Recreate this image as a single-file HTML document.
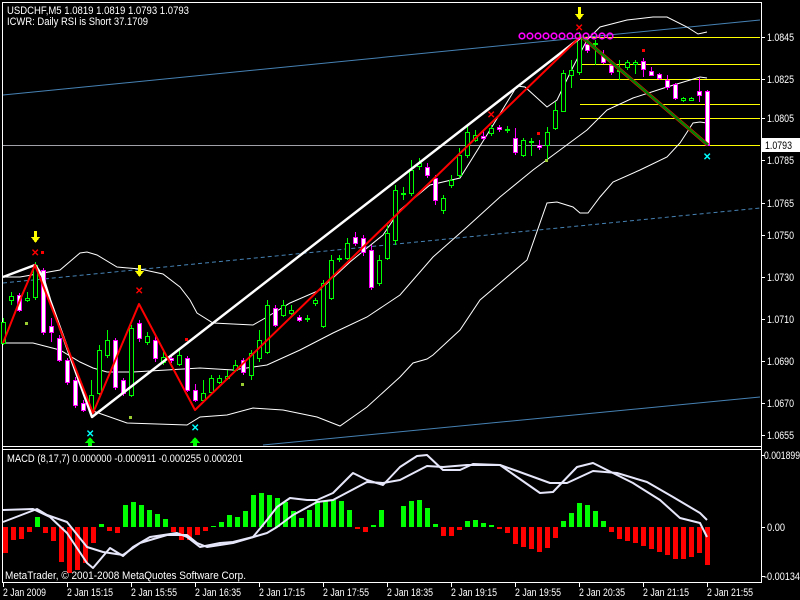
<!DOCTYPE html>
<html><head><meta charset="utf-8"><style>
html,body{margin:0;padding:0;background:#000;width:800px;height:600px;overflow:hidden}
svg{display:block}
text{font-family:"Liberation Sans",sans-serif;font-size:11px;fill:#fff}
</style></head><body>
<svg width="800" height="600" viewBox="0 0 800 600" xmlns="http://www.w3.org/2000/svg" shape-rendering="crispEdges">
<rect width="800" height="600" fill="#000"/>
<g stroke="#fff" stroke-width="1" fill="none">
<line x1="2.5" y1="2.5" x2="761.5" y2="2.5"/>
<line x1="2.5" y1="2" x2="2.5" y2="583"/>
<line x1="761.5" y1="2" x2="761.5" y2="583"/>
<line x1="2" y1="446.5" x2="762" y2="446.5"/>
<line x1="2" y1="449.5" x2="762" y2="449.5"/>
<line x1="2" y1="582.5" x2="762" y2="582.5"/>
</g>
<g stroke="#fff">
<line x1="762" y1="37.5" x2="765" y2="37.5"/><line x1="762" y1="79.5" x2="765" y2="79.5"/><line x1="762" y1="118.5" x2="765" y2="118.5"/><line x1="762" y1="160.5" x2="765" y2="160.5"/><line x1="762" y1="203.5" x2="765" y2="203.5"/><line x1="762" y1="235.5" x2="765" y2="235.5"/><line x1="762" y1="277.5" x2="765" y2="277.5"/><line x1="762" y1="319.5" x2="765" y2="319.5"/><line x1="762" y1="361.5" x2="765" y2="361.5"/><line x1="762" y1="403.5" x2="765" y2="403.5"/><line x1="762" y1="435.5" x2="765" y2="435.5"/>
<line x1="762" y1="455.5" x2="765" y2="455.5"/><line x1="762" y1="527.5" x2="765" y2="527.5"/><line x1="762" y1="576.5" x2="765" y2="576.5"/>
</g>
<g>
<text x="767" y="41" textLength="27" lengthAdjust="spacingAndGlyphs">1.0845</text><text x="767" y="83" textLength="27" lengthAdjust="spacingAndGlyphs">1.0825</text><text x="767" y="122" textLength="27" lengthAdjust="spacingAndGlyphs">1.0805</text><text x="767" y="164" textLength="27" lengthAdjust="spacingAndGlyphs">1.0785</text><text x="767" y="207" textLength="27" lengthAdjust="spacingAndGlyphs">1.0765</text><text x="767" y="239" textLength="27" lengthAdjust="spacingAndGlyphs">1.0750</text><text x="767" y="281" textLength="27" lengthAdjust="spacingAndGlyphs">1.0730</text><text x="767" y="323" textLength="27" lengthAdjust="spacingAndGlyphs">1.0710</text><text x="767" y="365" textLength="27" lengthAdjust="spacingAndGlyphs">1.0690</text><text x="767" y="407" textLength="27" lengthAdjust="spacingAndGlyphs">1.0670</text><text x="767" y="439" textLength="27" lengthAdjust="spacingAndGlyphs">1.0655</text>
<text x="764" y="459" textLength="36" lengthAdjust="spacingAndGlyphs">0.001899</text><text x="767" y="531" textLength="18" lengthAdjust="spacingAndGlyphs">0.00</text><text x="764" y="580" textLength="36" lengthAdjust="spacingAndGlyphs">-0.00134</text>
</g>
<g stroke="#fff"><line x1="3.5" y1="583" x2="3.5" y2="587"/><line x1="67.5" y1="583" x2="67.5" y2="587"/><line x1="131.5" y1="583" x2="131.5" y2="587"/><line x1="195.5" y1="583" x2="195.5" y2="587"/><line x1="259.5" y1="583" x2="259.5" y2="587"/><line x1="323.5" y1="583" x2="323.5" y2="587"/><line x1="387.5" y1="583" x2="387.5" y2="587"/><line x1="451.5" y1="583" x2="451.5" y2="587"/><line x1="515.5" y1="583" x2="515.5" y2="587"/><line x1="579.5" y1="583" x2="579.5" y2="587"/><line x1="643.5" y1="583" x2="643.5" y2="587"/><line x1="707.5" y1="583" x2="707.5" y2="587"/></g>
<g><text x="3" y="596" textLength="43" lengthAdjust="spacingAndGlyphs">2 Jan 2009</text><text x="67" y="596" textLength="46" lengthAdjust="spacingAndGlyphs">2 Jan 15:15</text><text x="131" y="596" textLength="46" lengthAdjust="spacingAndGlyphs">2 Jan 15:55</text><text x="195" y="596" textLength="46" lengthAdjust="spacingAndGlyphs">2 Jan 16:35</text><text x="259" y="596" textLength="46" lengthAdjust="spacingAndGlyphs">2 Jan 17:15</text><text x="323" y="596" textLength="46" lengthAdjust="spacingAndGlyphs">2 Jan 17:55</text><text x="387" y="596" textLength="46" lengthAdjust="spacingAndGlyphs">2 Jan 18:35</text><text x="451" y="596" textLength="46" lengthAdjust="spacingAndGlyphs">2 Jan 19:15</text><text x="515" y="596" textLength="46" lengthAdjust="spacingAndGlyphs">2 Jan 19:55</text><text x="579" y="596" textLength="46" lengthAdjust="spacingAndGlyphs">2 Jan 20:35</text><text x="643" y="596" textLength="46" lengthAdjust="spacingAndGlyphs">2 Jan 21:15</text><text x="707" y="596" textLength="46" lengthAdjust="spacingAndGlyphs">2 Jan 21:55</text></g>

<g shape-rendering="auto" fill="none" stroke="#4682B4" stroke-width="1">
<line x1="3" y1="95" x2="760" y2="20"/>
<line x1="3" y1="283" x2="760" y2="208" stroke-dasharray="4,3"/>
<line x1="263" y1="445" x2="760" y2="397"/>
</g>
<g stroke="#ffff00"><line x1="580" y1="37.5" x2="760" y2="37.5"/><line x1="580" y1="64.5" x2="760" y2="64.5"/><line x1="580" y1="79.5" x2="760" y2="79.5"/><line x1="580" y1="104.5" x2="760" y2="104.5"/><line x1="580" y1="118.5" x2="760" y2="118.5"/><line x1="580" y1="145.5" x2="760" y2="145.5"/></g>
<line x1="3" y1="145.5" x2="580" y2="145.5" stroke="#a0a0a8"/>
<rect x="762" y="138" width="38" height="14" fill="#fff"/>
<text x="765" y="149" textLength="27" lengthAdjust="spacingAndGlyphs" style="fill:#000">1.0793</text>

<g shape-rendering="auto" fill="none" stroke="#fff" stroke-width="1">
<polyline points="3,277 20,277 43,273 60,270 80,253 87,252 97,255 117,267 140,269 163,274 180,287 190,300 197,313 213,323 253,325 267,317 290,303 320,290 350,262 367,248 383,235 400,210 430,185 460,178 490,130 517,86 525,87 547,107 557,100 573,67 587,40 600,27 627,20 653,17 667,17 687,27 698,34 707,32"/>
<polyline points="3,343 33,343 60,350 80,362 93,368 107,372 133,372 200,368 233,370 267,365 300,350 333,333 367,317 400,295 433,257 467,227 500,197 533,170 560,150 587,130 607,110 633,98 667,87 700,77 707,78"/>
<polyline points="90,410 127,423 187,425 200,417 227,415 253,408 283,410 317,417 340,426 367,407 400,377 413,363 427,359 433,355 460,330 480,300 500,283 527,260 547,203 557,202 573,207 580,213 588,213 600,197 613,182 640,170 667,157 680,143 693,123 700,122 707,123"/>
</g>

<g stroke-width="1">
<g stroke="#00ff00">
<line x1="3.5" y1="318" x2="3.5" y2="345"/><line x1="11.5" y1="292" x2="11.5" y2="305"/><line x1="27.5" y1="292" x2="27.5" y2="302"/><line x1="35.5" y1="262" x2="35.5" y2="300"/><line x1="91.5" y1="380" x2="91.5" y2="412"/><line x1="99.5" y1="345" x2="99.5" y2="395"/><line x1="107.5" y1="330" x2="107.5" y2="358"/><line x1="131.5" y1="325" x2="131.5" y2="397"/><line x1="147.5" y1="332" x2="147.5" y2="345"/><line x1="163.5" y1="352" x2="163.5" y2="365"/><line x1="179.5" y1="350" x2="179.5" y2="366"/><line x1="203.5" y1="380" x2="203.5" y2="402"/><line x1="211.5" y1="375" x2="211.5" y2="393"/><line x1="219.5" y1="375" x2="219.5" y2="384"/><line x1="227.5" y1="370" x2="227.5" y2="380"/><line x1="235.5" y1="360" x2="235.5" y2="372"/><line x1="251.5" y1="350" x2="251.5" y2="380"/><line x1="259.5" y1="330" x2="259.5" y2="362"/><line x1="267.5" y1="300" x2="267.5" y2="354"/><line x1="283.5" y1="300" x2="283.5" y2="317"/><line x1="291.5" y1="305" x2="291.5" y2="315"/><line x1="307.5" y1="315" x2="307.5" y2="322"/><line x1="315.5" y1="298" x2="315.5" y2="306"/><line x1="323.5" y1="280" x2="323.5" y2="328"/><line x1="331.5" y1="255" x2="331.5" y2="300"/><line x1="339.5" y1="255" x2="339.5" y2="262"/><line x1="347.5" y1="238" x2="347.5" y2="260"/><line x1="379.5" y1="255" x2="379.5" y2="286"/><line x1="387.5" y1="225" x2="387.5" y2="260"/><line x1="395.5" y1="185" x2="395.5" y2="245"/><line x1="403.5" y1="187" x2="403.5" y2="200"/><line x1="411.5" y1="160" x2="411.5" y2="196"/><line x1="419.5" y1="158" x2="419.5" y2="170"/><line x1="443.5" y1="195" x2="443.5" y2="214"/><line x1="451.5" y1="175" x2="451.5" y2="188"/><line x1="459.5" y1="148" x2="459.5" y2="178"/><line x1="467.5" y1="125" x2="467.5" y2="158"/><line x1="475.5" y1="130" x2="475.5" y2="142"/><line x1="491.5" y1="125" x2="491.5" y2="136"/><line x1="507.5" y1="126" x2="507.5" y2="133"/><line x1="523.5" y1="138" x2="523.5" y2="157"/><line x1="531.5" y1="138" x2="531.5" y2="156"/><line x1="547.5" y1="127" x2="547.5" y2="160"/><line x1="555.5" y1="102" x2="555.5" y2="130"/><line x1="563.5" y1="70" x2="563.5" y2="112"/><line x1="571.5" y1="60" x2="571.5" y2="88"/><line x1="579.5" y1="32" x2="579.5" y2="75"/><line x1="595.5" y1="40" x2="595.5" y2="65"/><line x1="619.5" y1="60" x2="619.5" y2="80"/><line x1="627.5" y1="60" x2="627.5" y2="70"/><line x1="635.5" y1="60" x2="635.5" y2="74"/><line x1="683.5" y1="97" x2="683.5" y2="102"/><line x1="691.5" y1="97" x2="691.5" y2="101"/>
</g>
<g stroke="#ff00ff">
<line x1="19.5" y1="293" x2="19.5" y2="312"/><line x1="43.5" y1="268" x2="43.5" y2="335"/><line x1="51.5" y1="318" x2="51.5" y2="342"/><line x1="59.5" y1="335" x2="59.5" y2="362"/><line x1="67.5" y1="358" x2="67.5" y2="385"/><line x1="75.5" y1="377" x2="75.5" y2="408"/><line x1="83.5" y1="400" x2="83.5" y2="412"/><line x1="115.5" y1="338" x2="115.5" y2="390"/><line x1="123.5" y1="378" x2="123.5" y2="396"/><line x1="139.5" y1="320" x2="139.5" y2="342"/><line x1="155.5" y1="336" x2="155.5" y2="362"/><line x1="171.5" y1="356" x2="171.5" y2="363"/><line x1="187.5" y1="356" x2="187.5" y2="392"/><line x1="195.5" y1="384" x2="195.5" y2="402"/><line x1="243.5" y1="358" x2="243.5" y2="375"/><line x1="275.5" y1="305" x2="275.5" y2="327"/><line x1="299.5" y1="315" x2="299.5" y2="322"/><line x1="355.5" y1="232" x2="355.5" y2="246"/><line x1="363.5" y1="235" x2="363.5" y2="256"/><line x1="371.5" y1="245" x2="371.5" y2="290"/><line x1="427.5" y1="163" x2="427.5" y2="178"/><line x1="435.5" y1="175" x2="435.5" y2="205"/><line x1="483.5" y1="130" x2="483.5" y2="140"/><line x1="499.5" y1="125" x2="499.5" y2="132"/><line x1="515.5" y1="128" x2="515.5" y2="155"/><line x1="539.5" y1="140" x2="539.5" y2="150"/><line x1="587.5" y1="40" x2="587.5" y2="53"/><line x1="603.5" y1="50" x2="603.5" y2="64"/><line x1="611.5" y1="60" x2="611.5" y2="75"/><line x1="643.5" y1="58" x2="643.5" y2="77"/><line x1="651.5" y1="67" x2="651.5" y2="76"/><line x1="659.5" y1="73" x2="659.5" y2="80"/><line x1="667.5" y1="75" x2="667.5" y2="90"/><line x1="675.5" y1="83" x2="675.5" y2="100"/><line x1="699.5" y1="78" x2="699.5" y2="102"/><line x1="707.5" y1="90" x2="707.5" y2="146"/>
</g>
<g fill="#000" stroke="#00ff00">
<rect x="1.5" y="322.5" width="4" height="21"/><rect x="9.5" y="296.5" width="4" height="4"/><rect x="25.5" y="298.5" width="4" height="2"/><rect x="33.5" y="265.5" width="4" height="32"/><rect x="89.5" y="395.5" width="4" height="15"/><rect x="97.5" y="350.5" width="4" height="43"/><rect x="105.5" y="340.5" width="4" height="15"/><rect x="129.5" y="328.5" width="4" height="67"/><rect x="145.5" y="336.5" width="4" height="6"/><rect x="161.5" y="357.5" width="4" height="5"/><rect x="177.5" y="355.5" width="4" height="9"/><rect x="201.5" y="393.5" width="4" height="7"/><rect x="209.5" y="378.5" width="4" height="14"/><rect x="217.5" y="378.5" width="4" height="4"/><rect x="225.5" y="376.5" width="4" height="2"/><rect x="233.5" y="365.5" width="4" height="5"/><rect x="249.5" y="353.5" width="4" height="22"/><rect x="257.5" y="340.5" width="4" height="18"/><rect x="265.5" y="305.5" width="4" height="47"/><rect x="281.5" y="305.5" width="4" height="10"/><rect x="289.5" y="310.5" width="4" height="3"/><rect x="305.5" y="318.5" width="4" height="1"/><rect x="313.5" y="300.5" width="4" height="3"/><rect x="321.5" y="283.5" width="4" height="43"/><rect x="329.5" y="260.5" width="4" height="38"/><rect x="337.5" y="258.5" width="4" height="1"/><rect x="345.5" y="243.5" width="4" height="15"/><rect x="377.5" y="260.5" width="4" height="23"/><rect x="385.5" y="233.5" width="4" height="25"/><rect x="393.5" y="190.5" width="4" height="50"/><rect x="401.5" y="193.5" width="4" height="1"/><rect x="409.5" y="170.5" width="4" height="23"/><rect x="417.5" y="163.5" width="4" height="3"/><rect x="441.5" y="198.5" width="4" height="12"/><rect x="449.5" y="180.5" width="4" height="5"/><rect x="457.5" y="155.5" width="4" height="20"/><rect x="465.5" y="132.5" width="4" height="23"/><rect x="473.5" y="135.5" width="4" height="5"/><rect x="489.5" y="128.5" width="4" height="5"/><rect x="505.5" y="129.5" width="4" height="1"/><rect x="521.5" y="140.5" width="4" height="15"/><rect x="529.5" y="141.5" width="4" height="1"/><rect x="545.5" y="132.5" width="4" height="13"/><rect x="553.5" y="110.5" width="4" height="18"/><rect x="561.5" y="73.5" width="4" height="38"/><rect x="569.5" y="70.5" width="4" height="5"/><rect x="577.5" y="38.5" width="4" height="34"/><rect x="593.5" y="43.5" width="4" height="1"/><rect x="617.5" y="70.5" width="4" height="1"/><rect x="625.5" y="62.5" width="4" height="5"/><rect x="633.5" y="62.5" width="4" height="2"/><rect x="681.5" y="98.5" width="4" height="2"/><rect x="689.5" y="98.5" width="4" height="2"/>
</g>
<g fill="#fff" stroke="#ff00ff">
<rect x="17.5" y="295.5" width="4" height="15"/><rect x="41.5" y="270.5" width="4" height="62"/><rect x="49.5" y="326.5" width="4" height="6"/><rect x="57.5" y="338.5" width="4" height="22"/><rect x="65.5" y="360.5" width="4" height="22"/><rect x="73.5" y="380.5" width="4" height="25"/><rect x="81.5" y="403.5" width="4" height="7"/><rect x="113.5" y="340.5" width="4" height="47"/><rect x="121.5" y="380.5" width="4" height="13"/><rect x="137.5" y="323.5" width="4" height="15"/><rect x="153.5" y="340.5" width="4" height="18"/><rect x="169.5" y="358.5" width="4" height="2"/><rect x="185.5" y="358.5" width="4" height="32"/><rect x="193.5" y="390.5" width="4" height="10"/><rect x="241.5" y="360.5" width="4" height="12"/><rect x="273.5" y="308.5" width="4" height="17"/><rect x="297.5" y="317.5" width="4" height="3"/><rect x="353.5" y="237.5" width="4" height="6"/><rect x="361.5" y="238.5" width="4" height="14"/><rect x="369.5" y="250.5" width="4" height="37"/><rect x="425.5" y="167.5" width="4" height="8"/><rect x="433.5" y="178.5" width="4" height="22"/><rect x="481.5" y="136.5" width="4" height="2"/><rect x="497.5" y="127.5" width="4" height="2"/><rect x="513.5" y="138.5" width="4" height="14"/><rect x="537.5" y="145.5" width="4" height="2"/><rect x="585.5" y="44.5" width="4" height="6"/><rect x="601.5" y="55.5" width="4" height="7"/><rect x="609.5" y="65.5" width="4" height="7"/><rect x="641.5" y="61.5" width="4" height="8"/><rect x="649.5" y="71.5" width="4" height="4"/><rect x="657.5" y="74.5" width="4" height="4"/><rect x="665.5" y="80.5" width="4" height="7"/><rect x="673.5" y="84.5" width="4" height="14"/><rect x="697.5" y="91.5" width="4" height="4"/><rect x="705.5" y="91.5" width="4" height="54"/>
</g>
</g>

<g shape-rendering="auto" fill="none" stroke-linejoin="round">
<polyline points="3,277 35,265 43,277 50,300 92,417 580,38" stroke="#fff" stroke-width="2.5"/>
<polyline points="3,343 20,300 35,265 93,413 139,304 195,410 580,37" stroke="#ff0000" stroke-width="2"/>
<line x1="582" y1="37" x2="708" y2="145" stroke="#ff0000" stroke-width="3.5"/>
<line x1="582" y1="37" x2="708" y2="145" stroke="#008000" stroke-width="2.5"/>
</g>

<g fill="none" stroke="#ff00ff" stroke-width="1.6" shape-rendering="auto">
<circle cx="522" cy="36" r="2.8"/><circle cx="530" cy="36" r="2.8"/><circle cx="538" cy="36" r="2.8"/><circle cx="546" cy="36" r="2.8"/><circle cx="554" cy="36" r="2.8"/><circle cx="562" cy="36" r="2.8"/><circle cx="570" cy="36" r="2.8"/><circle cx="578" cy="36" r="2.8"/><circle cx="586" cy="36" r="2.8"/><circle cx="594" cy="36" r="2.8"/><circle cx="602" cy="36" r="2.8"/><circle cx="610" cy="36" r="2.8"/>
</g>

<g fill="#ffff00">
<path d="M34 231h3v6h3l-4.5 6l-4.5-6h3z"/>
<path d="M138 265h3v6h3l-4.5 6l-4.5-6h3z"/>
<path d="M578 7h3v7h3l-4.5 6l-4.5-6h3z"/>
</g>
<g fill="#00ff00">
<path d="M90 437l5 6h-3v3h-4v-3h-3z"/>
<path d="M195 437l5 6h-3v3h-4v-3h-3z"/>
</g>
<g font-weight="bold">
<text x="31" y="256" style="fill:#ff0000;font-size:10px">✕</text>
<text x="135" y="294" style="fill:#ff0000;font-size:10px">✕</text>
<text x="575" y="31" style="fill:#ff0000;font-size:10px">✕</text>
<text x="487" y="118" style="fill:#ff0000;font-size:10px">✕</text>
<text x="86" y="437" style="fill:#00ffff;font-size:10px">✕</text>
<text x="191" y="431" style="fill:#00ffff;font-size:10px">✕</text>
<text x="703" y="160" style="fill:#00ffff;font-size:10px">✕</text>
</g>
<g fill="#ff0000"><rect x="41" y="251" width="3" height="3"/><rect x="185" y="338" width="3" height="3"/><rect x="537" y="132" width="3" height="3"/><rect x="642" y="49" width="3" height="3"/></g>
<g fill="#9acd32"><rect x="25" y="322" width="3" height="3"/><rect x="129" y="416" width="3" height="3"/><rect x="241" y="383" width="3" height="3"/><rect x="545" y="159" width="3" height="3"/></g>

<g fill="#ff0000">
<rect x="3" y="527" width="5" height="26"/><rect x="11" y="527" width="5" height="13"/><rect x="19" y="527" width="5" height="12"/><rect x="27" y="527" width="5" height="5"/><rect x="43" y="527" width="5" height="6"/><rect x="51" y="527" width="5" height="14"/><rect x="59" y="527" width="5" height="35"/><rect x="67" y="527" width="5" height="46"/><rect x="75" y="527" width="5" height="43"/><rect x="83" y="527" width="5" height="36"/><rect x="91" y="527" width="5" height="16"/><rect x="107" y="527" width="5" height="4"/><rect x="115" y="527" width="5" height="6"/><rect x="171" y="527" width="5" height="5"/><rect x="179" y="527" width="5" height="13"/><rect x="187" y="527" width="5" height="13"/><rect x="195" y="527" width="5" height="8"/><rect x="203" y="527" width="5" height="4"/><rect x="355" y="527" width="5" height="2"/><rect x="363" y="527" width="5" height="5"/>
<rect x="441" y="527" width="5" height="9"/><rect x="449" y="527" width="5" height="9"/><rect x="457" y="527" width="5" height="3"/><rect x="497" y="527" width="5" height="2"/><rect x="505" y="527" width="5" height="6"/><rect x="513" y="527" width="5" height="17"/><rect x="521" y="527" width="5" height="20"/><rect x="529" y="527" width="5" height="22"/><rect x="537" y="527" width="5" height="25"/><rect x="545" y="527" width="5" height="21"/><rect x="553" y="527" width="5" height="11"/><rect x="609" y="527" width="5" height="5"/><rect x="617" y="527" width="5" height="12"/><rect x="625" y="527" width="5" height="14"/><rect x="633" y="527" width="5" height="16"/><rect x="641" y="527" width="5" height="19"/><rect x="649" y="527" width="5" height="22"/><rect x="657" y="527" width="5" height="25"/><rect x="665" y="527" width="5" height="28"/><rect x="673" y="527" width="5" height="32"/><rect x="681" y="527" width="5" height="32"/><rect x="689" y="527" width="5" height="30"/><rect x="697" y="527" width="5" height="26"/><rect x="705" y="527" width="5" height="38"/>
</g>
<g fill="#00ff00">
<rect x="35" y="517" width="5" height="10"/><rect x="99" y="524" width="5" height="3"/><rect x="123" y="505" width="5" height="22"/><rect x="131" y="502" width="5" height="25"/><rect x="139" y="505" width="5" height="22"/><rect x="147" y="510" width="5" height="17"/><rect x="155" y="514" width="5" height="13"/><rect x="163" y="519" width="5" height="8"/><rect x="211" y="526" width="5" height="1"/><rect x="219" y="522" width="5" height="5"/><rect x="227" y="515" width="5" height="12"/><rect x="235" y="517" width="5" height="10"/><rect x="243" y="511" width="5" height="16"/><rect x="251" y="495" width="5" height="32"/><rect x="259" y="493" width="5" height="34"/><rect x="267" y="495" width="5" height="32"/><rect x="275" y="498" width="5" height="29"/><rect x="283" y="502" width="5" height="25"/><rect x="291" y="511" width="5" height="16"/><rect x="299" y="518" width="5" height="9"/><rect x="307" y="510" width="5" height="17"/><rect x="315" y="501" width="5" height="26"/><rect x="323" y="501" width="5" height="26"/><rect x="331" y="500" width="5" height="27"/><rect x="339" y="501" width="5" height="26"/><rect x="347" y="510" width="5" height="17"/><rect x="371" y="525" width="5" height="2"/><rect x="379" y="510" width="5" height="17"/>
<rect x="401" y="506" width="5" height="21"/><rect x="409" y="501" width="5" height="26"/><rect x="417" y="500" width="5" height="27"/><rect x="425" y="508" width="5" height="19"/><rect x="433" y="524" width="5" height="3"/><rect x="465" y="521" width="5" height="6"/><rect x="473" y="520" width="5" height="7"/><rect x="481" y="523" width="5" height="4"/><rect x="489" y="525" width="5" height="2"/><rect x="561" y="521" width="5" height="6"/><rect x="569" y="513" width="5" height="14"/><rect x="577" y="503" width="5" height="24"/><rect x="585" y="505" width="5" height="22"/><rect x="593" y="511" width="5" height="16"/><rect x="601" y="521" width="5" height="6"/>
</g>
<g shape-rendering="auto" fill="none" stroke="#e6e6fa" stroke-width="2" stroke-linejoin="round">
<polyline points="3,510 33,509 50,517 67,533 87,563 93,568 110,548 123,556 133,547 150,537 177,533 187,537 200,547 220,543 233,542 253,537 267,520 277,507 290,498 307,500 317,500 333,493 353,473 367,480 383,485 400,467 417,456 427,455 443,470 460,470 473,464 500,465 517,477 540,493 553,492 577,467 593,463 613,473 633,483 660,500 680,518 700,523 707,537"/>
<polyline points="3,522 37,509 47,515 67,522 87,547 103,552 123,555 140,543 167,535 187,535 197,543 207,547 233,543 267,533 277,527 293,515 317,502 333,500 367,482 383,483 400,480 427,466 443,467 467,465 500,465 517,471 550,483 567,483 593,471 617,473 647,482 673,497 700,513 707,520"/>
</g>

<text x="7" y="14" textLength="182" lengthAdjust="spacingAndGlyphs">USDCHF,M5  1.0819 1.0819 1.0793 1.0793</text>
<text x="7" y="25" textLength="141" lengthAdjust="spacingAndGlyphs">ICWR: Daily RSI is Short 37.1709</text>
<text x="7" y="462" textLength="236" lengthAdjust="spacingAndGlyphs">MACD  (8,17,7) 0.000000 -0.000911 -0.000255 0.000201</text>
<text x="5" y="579" textLength="241" lengthAdjust="spacingAndGlyphs">MetaTrader, © 2001-2008 MetaQuotes Software Corp.</text>
</svg>
</body></html>
